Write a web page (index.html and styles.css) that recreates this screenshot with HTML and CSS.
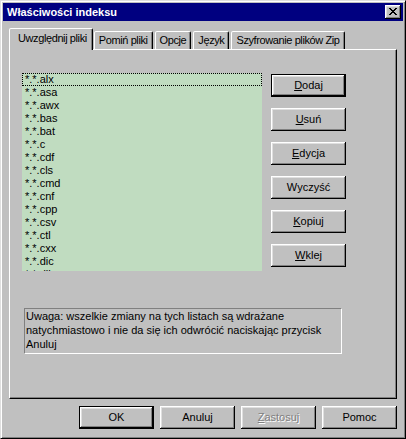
FILE: index.html
```html
<!DOCTYPE html>
<html lang="pl">
<head>
<meta charset="utf-8">
<title>Właściwości indeksu</title>
<link rel="stylesheet" href="styles.css">
</head>
<body>
<div class="window">
  <div class="titlebar">
    <span class="title">Właściwości indeksu</span>
    <div class="close" aria-label="Zamknij">
      <svg width="8" height="7" viewBox="0 0 8 7" shape-rendering="crispEdges"><path d="M0 0h2v1H0zM6 0h2v1H6zM1 1h2v1H1zM5 1h2v1H5zM2 2h4v1H2zM3 3h2v1H3zM2 4h4v1H2zM1 5h2v1H1zM5 5h2v1H5zM0 6h2v1H0zM6 6h2v1H6z" fill="#000"/></svg>
    </div>
  </div>
  <div class="body">
    <div class="tabs">
      <div class="tab active">Uwzględnij pliki</div>
      <div class="tab">Pomiń pliki</div>
      <div class="tab">Opcje</div>
      <div class="tab">Język</div>
      <div class="tab">Szyfrowanie plików Zip</div>
    </div>
    <div class="panel">
      <div class="top">
        <div class="list">
          <div class="item focus">*.*.alx</div>
          <div class="item">*.*.asa</div>
          <div class="item">*.*.awx</div>
          <div class="item">*.*.bas</div>
          <div class="item">*.*.bat</div>
          <div class="item">*.*.c</div>
          <div class="item">*.*.cdf</div>
          <div class="item">*.*.cls</div>
          <div class="item">*.*.cmd</div>
          <div class="item">*.*.cnf</div>
          <div class="item">*.*.cpp</div>
          <div class="item">*.*.csv</div>
          <div class="item">*.*.ctl</div>
          <div class="item">*.*.cxx</div>
          <div class="item">*.*.dic</div>
          <div class="item">*.*.dll</div>
        </div>
        <div class="btncol">
          <div class="btn default"><u>D</u>odaj</div>
          <div class="btn"><u>U</u>suń</div>
          <div class="btn"><u>E</u>dycja</div>
          <div class="btn">Wyczyść</div>
          <div class="btn"><u>K</u>opiuj</div>
          <div class="btn"><u>W</u>klej</div>
        </div>
      </div>
      <div class="note">Uwaga: wszelkie zmiany na tych listach są wdrażane<br>natychmiastowo i nie da się ich odwrócić naciskając przycisk<br>Anuluj</div>
    </div>
    <div class="footer">
      <div class="btn default">OK</div>
      <div class="btn">Anuluj</div>
      <div class="btn disabled"><u>Z</u>astosuj</div>
      <div class="btn">Pomoc</div>
    </div>
  </div>
</div>
</body>
</html>
```

FILE: styles.css
```css
* { box-sizing: border-box; }
html, body { margin: 0; padding: 0; }
body {
  background: #c0c0c0;
  font-family: "Liberation Sans", Arial, sans-serif;
  font-size: 11px;
  color: #000;
}
.window {
  width: 406px;
  height: 439px;
  border: 1px solid;
  border-color: #dfdfdf #000 #000 #dfdfdf;
  box-shadow: inset 1px 1px #fff, inset -1px -1px #808080;
  padding: 2px;
  background: #c0c0c0;
  display: flex;
  flex-direction: column;
}
.titlebar {
  height: 18px;
  flex: none;
  background: #000080;
  color: #fff;
  font-weight: bold;
  display: flex;
  align-items: center;
  justify-content: space-between;
  padding: 0 2px 0 4px;
}
.close {
  width: 16px;
  height: 14px;
  background: #c0c0c0;
  box-shadow: inset -1px -1px #000, inset 1px 1px #fff, inset -2px -2px #808080, inset 2px 2px #dfdfdf;
  display: flex;
  align-items: center;
  justify-content: center;
  padding-bottom: 1px;
}
.close svg { display: block; }
.body {
  flex: 1;
  padding: 7px 6px 7px 6px;
  display: flex;
  flex-direction: column;
}
.tabs {
  display: flex;
  align-items: flex-end;
  height: 21px;
  flex: none;
  letter-spacing: -0.4px;
}
.tab {
  height: 18px;
  padding: 0 4px 1px 4px;
  border: 1px solid;
  border-bottom: 0;
  border-color: #fff #000 transparent #fff;
  border-radius: 2px 2px 0 0;
  box-shadow: inset -1px 0 #808080;
  display: flex;
  align-items: center;
  white-space: nowrap;
  margin-left: 2px;
  background: #c0c0c0;
}
.tab.active {
  height: 22px;
  margin-bottom: -1px;
  padding: 0 5px 3px 8px;
  margin-left: 0;
  margin-right: -1px;
  position: relative;
  z-index: 2;
}
.panel {
  height: 350px;
  flex: none;
  border: 1px solid;
  border-color: #fff #000 #000 #fff;
  box-shadow: inset -1px -1px #808080;
  padding: 23px 0 0 12px;
  display: flex;
  flex-direction: column;
}
.top {
  display: flex;
  gap: 9px;
}
.list {
  width: 240px;
  height: 198px;
  background: #c0dcc0;
  overflow: hidden;
}
.item {
  height: 13px;
  line-height: 13px;
  padding-left: 3px;
  white-space: nowrap;
}
.item.focus {
  outline: 1px dotted #000;
  outline-offset: -1px;
}
.btncol {
  display: flex;
  flex-direction: column;
  gap: 11px;
  margin-top: 1px;
}
.btn {
  width: 75px;
  height: 23px;
  background: #c0c0c0;
  box-shadow: inset -1px -1px #000, inset 1px 1px #fff, inset -2px -2px #808080, inset 2px 2px #dfdfdf;
  display: flex;
  align-items: center;
  justify-content: center;
  padding-bottom: 1px;
  white-space: nowrap;
}
.btn.default {
  border: 1px solid #000;
}
.btn.disabled {
  color: #808080;
  text-shadow: 1px 1px #fff;
}
.note {
  margin-top: 37px;
  margin-left: 2px;
  width: 318px;
  height: 46px;
  border: 1px solid;
  border-color: #808080 #fff #fff #808080;
  padding: 0 0 0 1px;
  line-height: 14px;
  white-space: nowrap;
}
.footer {
  margin-top: 7px;
  height: 23px;
  flex: none;
  display: flex;
  justify-content: flex-end;
  gap: 6px;
}
```
